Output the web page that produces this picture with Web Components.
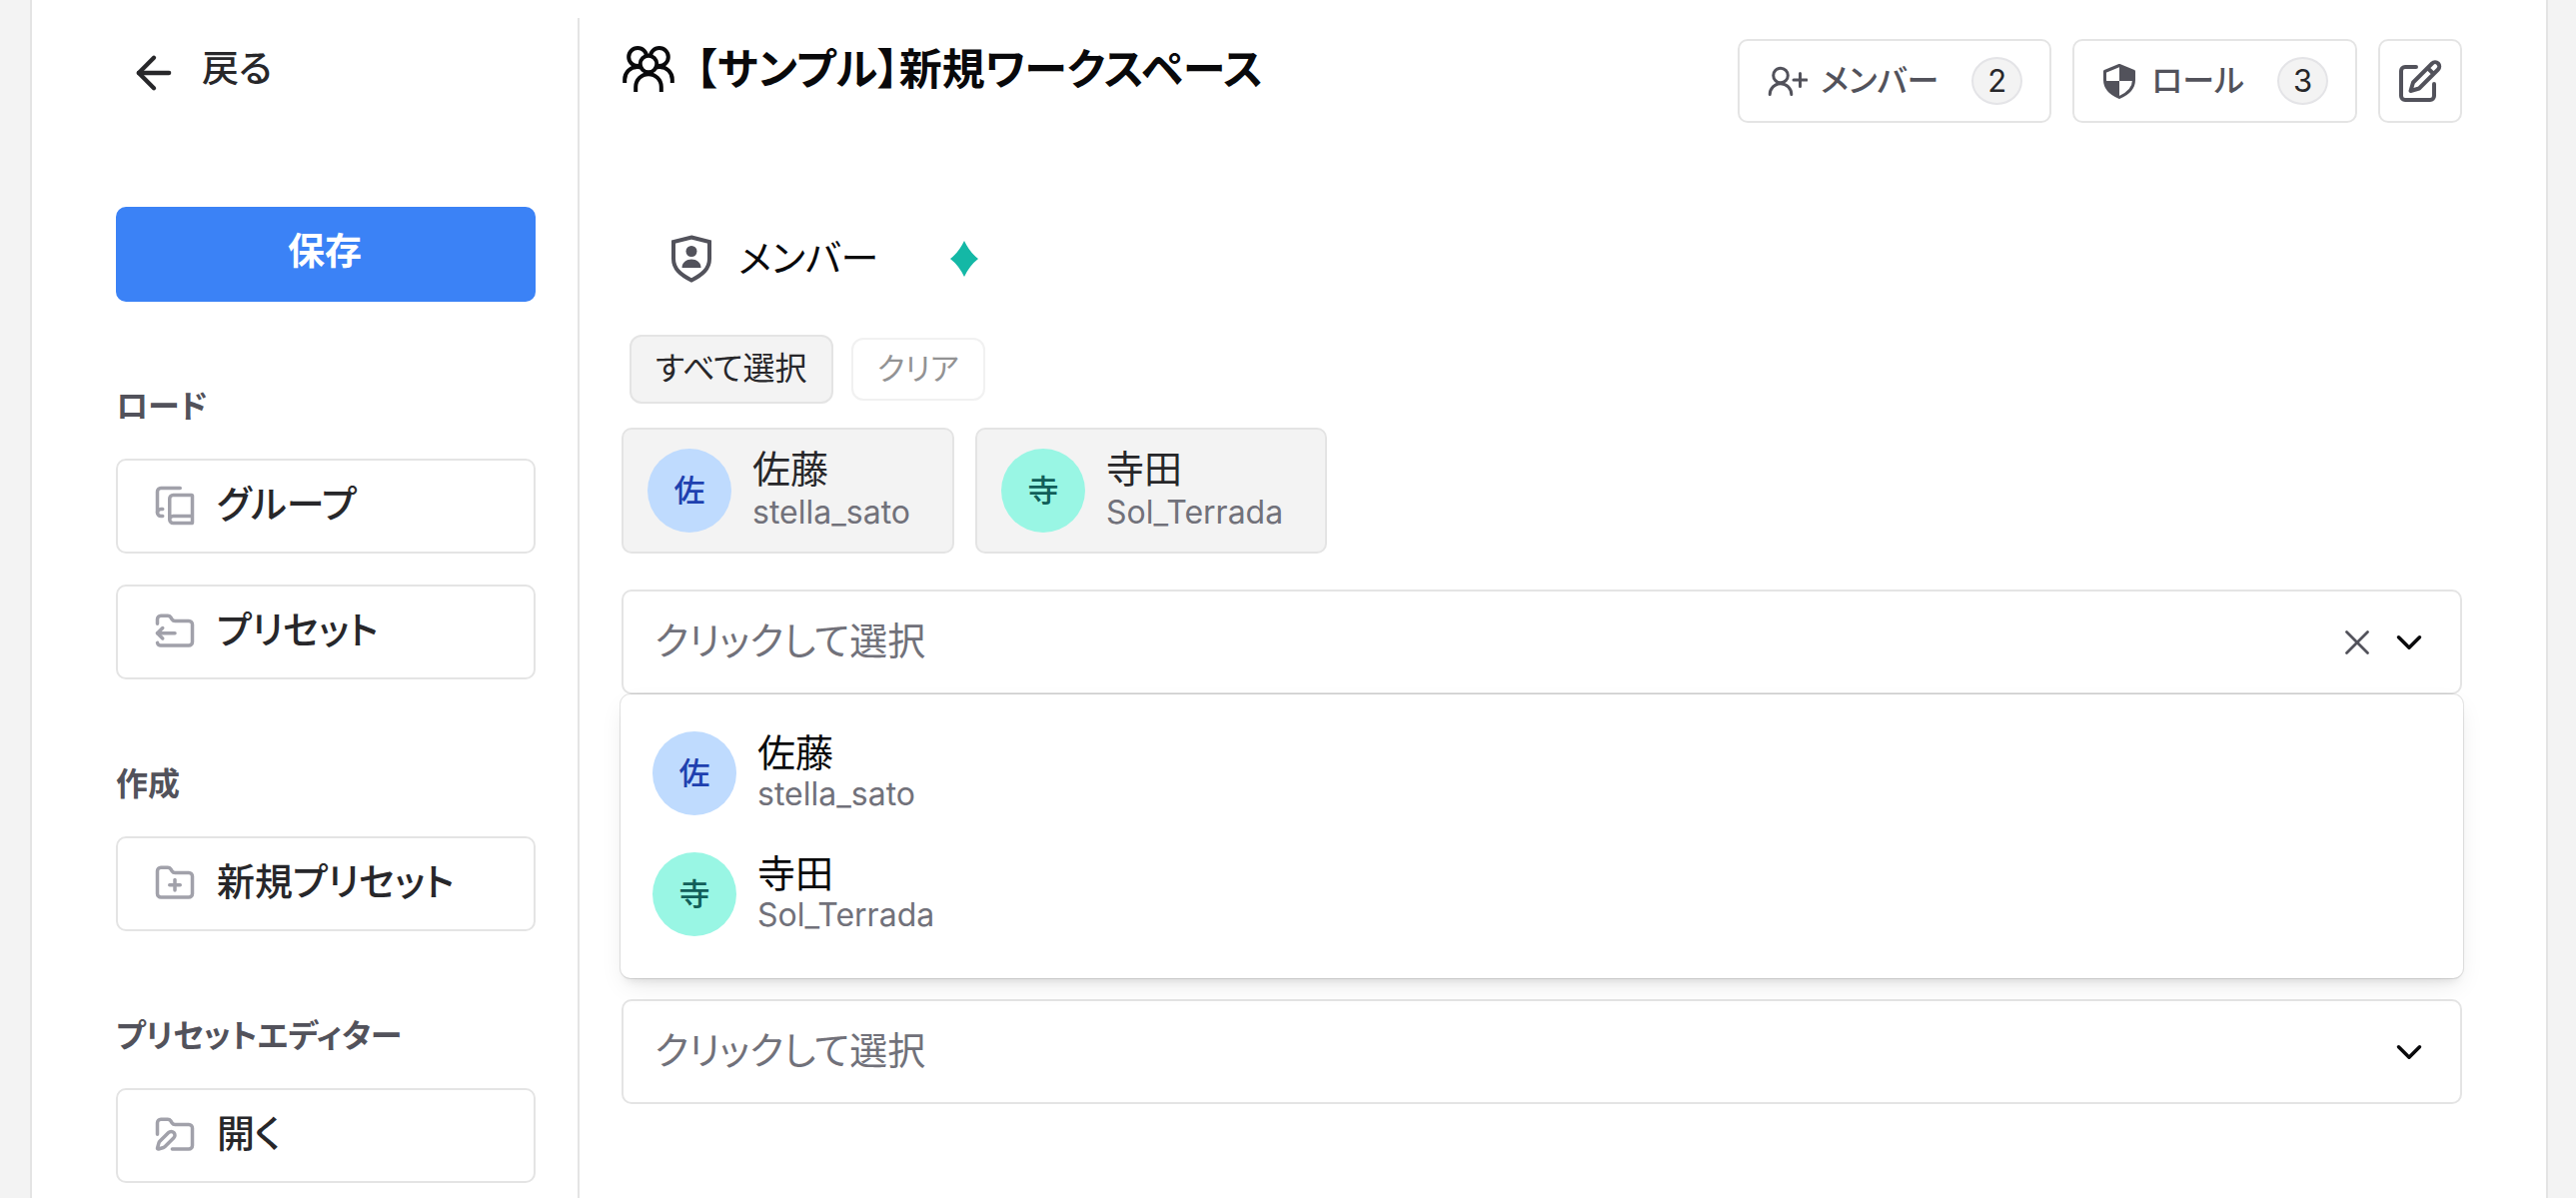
<!DOCTYPE html>
<html lang="ja">
<head>
<meta charset="utf-8">
<title>新規ワークスペース</title>
<style>
  body {
    margin: 0;
    background: #f3f3f3;
    color: #09090b;
    font-family: Inter, "Noto Sans CJK JP", sans-serif;
    font-feature-settings: "palt";
  }
</style>
</head>
<body>
<workspace-shell>
  <side-bar slot="sidebar">
    <back-link>戻る</back-link>
    <save-button>保存</save-button>
    <side-section heading="ロード">
      <side-button icon="book-copy">グループ</side-button>
      <side-button icon="folder-output">プリセット</side-button>
    </side-section>
    <side-section heading="作成">
      <side-button icon="folder-plus">新規プリセット</side-button>
    </side-section>
    <side-section heading="プリセットエディター">
      <side-button icon="folder-pen">開く</side-button>
    </side-section>
  </side-bar>
  <page-header heading="【サンプル】新規ワークスペース">
    <header-button icon="user-plus" count="2">メンバー</header-button>
    <header-button icon="shield" count="3">ロール</header-button>
    <header-button icon="edit" label="編集"></header-button>
  </page-header>
  <member-heading>メンバー</member-heading>
  <selection-actions></selection-actions>
  <member-chips>
    <user-card variant="chip" tone="blue" initial="佐" name="佐藤" handle="stella_sato"></user-card>
    <user-card variant="chip" tone="teal" initial="寺" name="寺田" handle="Sol_Terrada"></user-card>
  </member-chips>
  <member-select label="メンバーを選択" open>
    <user-card variant="option" role="option" tone="blue" initial="佐" name="佐藤" handle="stella_sato"></user-card>
    <user-card variant="option" role="option" tone="teal" initial="寺" name="寺田" handle="Sol_Terrada"></user-card>
  </member-select>
  <member-select class="next" label="追加の選択"></member-select>
</workspace-shell>

<script>
const line = (w, h, sw, body) =>
  `<svg width="${w}" height="${h}" viewBox="0 0 ${w} ${h}" fill="none" stroke="currentColor" stroke-width="${sw}" aria-hidden="true">${body}</svg>`;
const grid = (size, sw, body) =>
  `<svg width="${size}" height="${size}" viewBox="0 0 24 24" fill="none" stroke="currentColor" stroke-width="${sw}" stroke-linecap="round" stroke-linejoin="round" aria-hidden="true">${body}</svg>`;

const ICONS = {
  "arrow-left": grid(52, 2, '<path d="m12 19-7-7 7-7"/><path d="M19 12H5"/>'),
  "book-copy": grid(42, 2, '<path d="M2 16V4a2 2 0 0 1 2-2h11"/><path d="M22 18H11a2 2 0 1 0 0 4h10.5a.5.5 0 0 0 .5-.5v-15a.5.5 0 0 0-.5-.5H11a2 2 0 0 0-2 2v12"/><path d="M5 14H4a2 2 0 1 0 0 4h1"/>'),
  "folder-output": grid(42, 2, '<path d="M2 7.5V5a2 2 0 0 1 2-2h3.9a2 2 0 0 1 1.69.9l.81 1.2a2 2 0 0 0 1.67.9H20a2 2 0 0 1 2 2v10a2 2 0 0 1-2 2H4a2 2 0 0 1-2-1.5"/><path d="M2 13h10"/><path d="m5 10-3 3 3 3"/>'),
  "folder-plus": grid(42, 2, '<path d="M12 10v6"/><path d="M9 13h6"/><path d="M20 20a2 2 0 0 0 2-2V8a2 2 0 0 0-2-2h-7.9a2 2 0 0 1-1.69-.9L9.6 3.9A2 2 0 0 0 7.93 3H4a2 2 0 0 0-2 2v13a2 2 0 0 0 2 2Z"/>'),
  "folder-pen": grid(42, 2, '<path d="M2 11.5V5a2 2 0 0 1 2-2h3.9c.7 0 1.3.3 1.7.9l.8 1.2c.4.6 1 .9 1.7.9H20a2 2 0 0 1 2 2v10a2 2 0 0 1-2 2h-9.5"/><path d="M11.378 13.626a1 1 0 1 0-3.004-3.004l-5.01 5.012a2 2 0 0 0-.506.854l-.837 2.87a.5.5 0 0 0 .62.62l2.87-.837a2 2 0 0 0 .854-.506z"/>'),
  "chevron-down": grid(42, 2, '<path d="m6 9 6 6 6-6"/>'),
  "close": grid(42, 1.6, '<path d="M18 6 6 18"/><path d="m6 6 12 12"/>'),
  "people": line(54, 48, 4, '<circle cx="16.2" cy="12" r="9"/><circle cx="37.8" cy="12" r="9"/><path d="M3.2 38V34.500a12.500 12.500 0 0 1 12.500-12.500c2.200 0 4 .4 5.600 1.200M50.800 38V34.500a12.500 12.500 0 0 0-12.500-12.500c-2.200 0-4 .4-5.600 1.200"/><circle cx="27" cy="19" r="8.300" fill="#fff"/><path d="M14.200 47V42a12.800 12.800 0 0 1 25.600 0V47"/>'),
  "user-plus": line(40, 30, 3, '<circle cx="13" cy="9.500" r="7.300"/><path d="M2.200 28.500a10.800 10.800 0 0 1 21.600 0M32.500 7.500v13M26 14h13" stroke-linecap="round"/>'),
  "shield": line(36, 36, 3, '<path d="M17 2.500 31.500 8.500V17C31.500 25 25 31 17 34.500 9 31 2.500 25 2.500 17V8.500Z" stroke-linejoin="round"/><path d="M17 2.500 31.500 8.500V18H17ZM17 18V34.500C9 31 3 25 2.500 18Z" fill="currentColor" stroke="none"/>'),
  "edit": line(44, 44, 4, '<path d="M18 8H7a4 4 0 0 0-4 4V37a4 4 0 0 0 4 4H32a4 4 0 0 0 4-4V25M34 4.500a4 4 0 0 1 6 6L21 29.500l-8.500 2.500L15 23.500ZM29.500 9l6 6" stroke-linecap="round" stroke-linejoin="round"/>'),
  "member-badge": line(40, 48, 4, '<path d="M20 2.500 38 7V24C38 34 31 40 20 45.500 9 40 2 34 2 24V7Z"/><circle cx="20" cy="16.500" r="5.500" fill="currentColor" stroke="none"/><path d="M10.500 33C10.500 27.500 15 24.500 20 24.500s9.500 3 9.500 8.500Z" fill="currentColor" stroke="none"/>'),
  "spark": '<svg width="28" height="36" viewBox="0 0 28 36" aria-hidden="true"><path d="M14 0Q19.500 11.500 28 18 19.500 24.500 14 36 8.500 24.500 0 18 8.500 11.500 14 0Z" fill="#14b8a6"/></svg>'
};

const BASE = `
  *, *::before, *::after { box-sizing: border-box; }
  svg { display: block; flex: none; }
  button, select { font: inherit; color: inherit; margin: 0; cursor: pointer; }
`;

function define(tag, render) {
  customElements.define(tag, class extends HTMLElement {
    connectedCallback() {
      if (this.shadowRoot) return;
      const root = this.attachShadow({ mode: "open" });
      const t = document.createElement("template");
      const get = (name) => this.getAttribute(name) || "";
      t.innerHTML = `<style>${BASE}</style>` + render(get, this);
      root.append(t.content.cloneNode(true));
    }
  });
}

define("workspace-shell", () => `
  <style>
    :host { display: block; padding: 0 28px 0 30px; }
    .sheet { display: flex; min-height: 100vh; background: #fff; border: solid #e4e4e4; border-width: 0 2px; }
    .side { flex: none; width: 548px; margin-top: 18px; border-right: 2px solid #e4e4e4; }
    main { flex: 1; min-width: 0; padding: 39px 84px 42px 42px; }
    ::slotted(.next) { margin-top: 305px; }
  </style>
  <div class="sheet">
    <div class="side"><slot name="sidebar"></slot></div>
    <main><slot></slot></main>
  </div>`);

define("side-bar", () => `
  <style>
    :host { display: block; }
    nav { display: flex; flex-direction: column; padding: 18px 42px 15px 84px; }
  </style>
  <nav><slot></slot></nav>`);

define("back-link", () => `
  <style>
    :host { display: block; margin-bottom: 97px; }
    a { display: inline-flex; align-items: center; gap: 22px; height: 74px; padding-left: 12px; color: #27272a; text-decoration: none; font-size: 37px; line-height: 48px; font-weight: 500; }
    span { padding-bottom: 8px; }
  </style>
  <a href="#">${ICONS["arrow-left"]}<span><slot></slot></span></a>`);

define("save-button", () => `
  <style>
    :host { display: block; }
    button { width: 100%; height: 95px; border: 0; border-radius: 10px; padding: 0 2px 6px 0; background: #3b82f6; color: #fff; font-size: 37px; line-height: 48px; font-weight: 700; }
  </style>
  <button type="button"><slot></slot></button>`);

define("side-section", (get) => `
  <style>
    :host { display: block; padding-top: 81px; }
    h2 { margin: 0 0 28px; font-size: 32px; line-height: 48px; font-weight: 700; color: #52525b; }
    div { display: flex; flex-direction: column; gap: 31px; }
  </style>
  <h2>${get("heading")}</h2>
  <div><slot></slot></div>`);

define("side-button", (get) => `
  <style>
    :host { display: block; }
    button { display: flex; align-items: center; gap: 21px; width: 100%; height: 95px; padding: 0 36px 1px; border: 2px solid #e4e4e4; border-radius: 10px; background: #fff; color: #27272a; font-size: 38px; line-height: 48px; font-weight: 500; text-align: left; }
    svg { color: #a1a1aa; }
    span { padding-bottom: 4px; }
  </style>
  <button type="button">${ICONS[get("icon")]}<span><slot></slot></span></button>`);

define("page-header", (get) => `
  <style>
    :host { display: block; }
    header { display: flex; align-items: flex-start; justify-content: space-between; gap: 21px; }
    h1 { display: flex; align-items: center; gap: 20px; margin: 0; font-size: 43px; line-height: 60px; font-weight: 700; }
    .actions { display: flex; gap: 21px; }
  </style>
  <header>
    <h1>${ICONS.people}<span>${get("heading")}</span></h1>
    <div class="actions"><slot></slot></div>
  </header>`);

define("header-button", (get) => `
  <style>
    :host { display: block; }
    button { display: flex; align-items: center; gap: 13px; height: 84px; padding: 0 27px 0 28px; border: 2px solid #e4e4e4; border-radius: 10px; background: #fff; color: #52525b; font-size: 32px; line-height: 48px; font-weight: 500; }
    button[aria-label] { padding: 0 18px; }
    .badge { display: flex; align-items: center; justify-content: center; width: 51px; height: 48px; margin-left: 20px; border: 2px solid #e4e4e7; border-radius: 50%; background: #f3f3f3; color: #27272a; font-size: 31px; line-height: 44px; font-weight: 400; }
  </style>
  ${get("label")
    ? `<button type="button" aria-label="${get("label")}">${ICONS[get("icon")]}</button>`
    : `<button type="button">${ICONS[get("icon")]}<span><slot></slot></span><span class="badge">${get("count")}</span></button>`}`);

define("member-heading", () => `
  <style>
    :host { display: block; margin-top: 94px; }
    h2 { display: flex; align-items: center; height: 84px; margin: 0; padding-left: 50px; font-size: 38px; line-height: 48px; font-weight: 400; }
    .shield { color: #52525b; }
    .text { margin: 0 72px 0 27px; padding-bottom: 3px; }
  </style>
  <h2><span class="shield">${ICONS["member-badge"]}</span><span class="text"><slot></slot></span>${ICONS.spark}</h2>`);

define("selection-actions", () => `
  <style>
    :host { display: block; margin-top: 34px; }
    div { display: flex; align-items: center; gap: 18px; padding-left: 8px; }
    button { border: 2px solid #e4e4e4; border-radius: 12px; background: #fff; padding: 0 24px 2px; height: 63px; font-size: 31px; line-height: 48px; color: #27272a; }
    .all { height: 69px; font-size: 32px; background: #f3f3f3; }
    .clear { opacity: .5; }
  </style>
  <div>
    <button type="button" class="all">すべて選択</button>
    <button type="button" class="clear">クリア</button>
  </div>`);

define("member-chips", () => `
  <style>
    :host { display: flex; gap: 21px; margin: 24px 0 36px; }
  </style>
  <slot></slot>`);

define("user-card", (get) => `
  <style>
    :host { display: block; }
    .row { display: flex; align-items: center; gap: 21px; width: 100%; text-align: left; border: 0; background: none; }
    .chip { height: 126px; padding: 0 42px 0 24px; border: 2px solid #e4e4e4; border-radius: 10px; background: #f3f3f3; color: #27272a; }
    .option { height: 121px; padding: 0 32px; color: #09090b; }
    .avatar { display: flex; align-items: center; justify-content: center; flex: none; width: 84px; height: 84px; border-radius: 50%; font-size: 31px; line-height: 48px; font-weight: 500; }
    .blue { background: #bfdbfe; color: #1e40af; }
    .teal { background: #99f6e4; color: #115e59; }
    .text { display: flex; flex-direction: column; }
    .name { font-size: 38px; line-height: 42px; }
    .chip .text { gap: 2px; }
    .handle { font-size: 32px; line-height: 42px; color: #71717a; }
  </style>
  <button type="button" class="row ${get("variant")}">
    <span class="avatar ${get("tone")}">${get("initial")}</span>
    <span class="text"><span class="name">${get("name")}</span><span class="handle">${get("handle")}</span></span>
  </button>`);

define("member-select", (get, el) => `
  <style>
    :host { display: block; position: relative; }
    .field { display: flex; align-items: center; gap: 10px; height: 105px; padding-right: 30px; border: 2px solid #e4e4e4; border-radius: 10px; background: #fff; }
    label { display: flex; flex: 1; min-width: 0; height: 100%; }
    select { flex: 1; min-width: 0; appearance: none; border: 0; background: none; padding: 0 0 4px 31px; font-size: 38px; color: #71717a; }
    button { border: 0; background: none; padding: 0; color: #52525b; }
    .menu { position: absolute; z-index: 1; left: -1px; right: -1px; top: 100%; padding: 18px 0 24px; border-radius: 10px; background: #fff; box-shadow: 0 0 0 1px rgba(0,0,0,.1), 0 10px 26px -5px rgba(0,0,0,.1), 0 8px 10px -6px rgba(0,0,0,.1); }
  </style>
  <div class="field">
    <label><select aria-label="${get("label")}"><option>クリックして選択</option></select></label>
    ${el.hasAttribute("open") ? `<button type="button" aria-label="クリア">${ICONS.close}</button>` : ""}
    ${ICONS["chevron-down"]}
  </div>
  ${el.hasAttribute("open") ? `<div class="menu" role="listbox"><slot></slot></div>` : ""}`);
</script>
</body>
</html>
